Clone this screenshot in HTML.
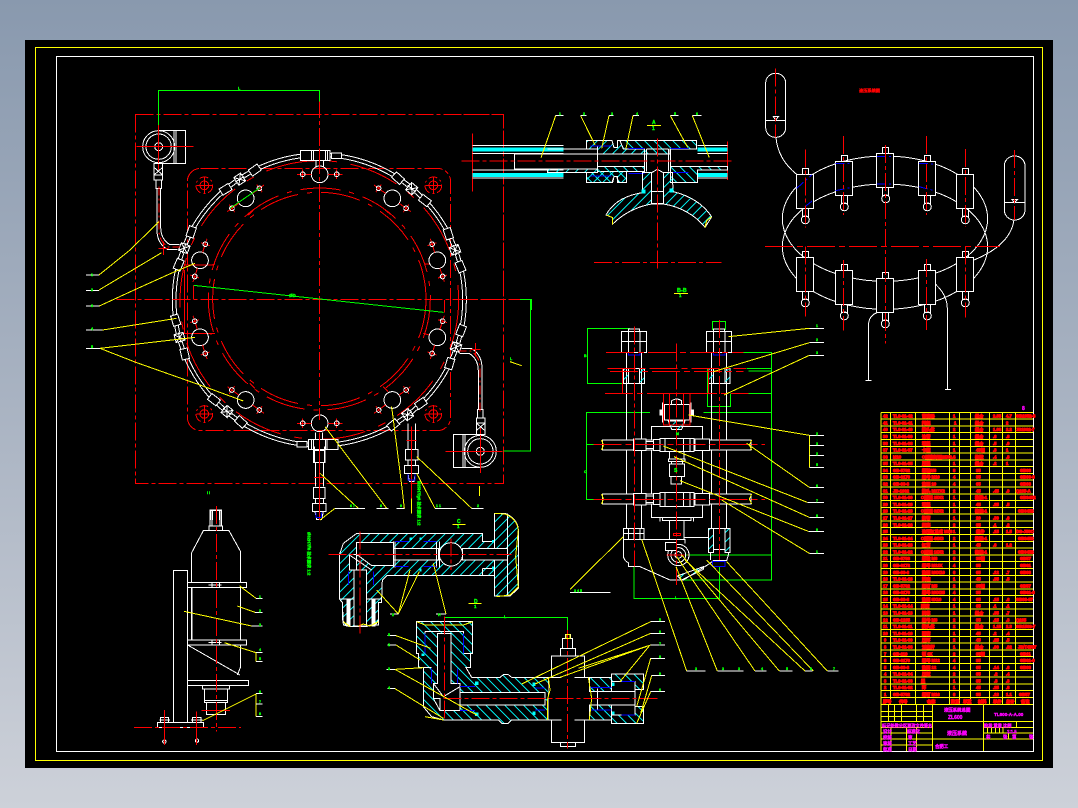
<!DOCTYPE html>
<html lang="zh"><head><meta charset="utf-8"><title>液压系统总图</title>
<style>
html,body{margin:0;padding:0;width:1078px;height:808px;overflow:hidden;background:linear-gradient(180deg,#8999ae 0%,#a9b3c2 50%,#cdd1d9 100%)}
svg{position:absolute;left:0;top:0;display:block}
svg *{vector-effect:non-scaling-stroke;fill:none;stroke-width:1}
pattern *{vector-effect:none!important;stroke-width:4.5!important;stroke:#0ff}
.w{stroke:#fff}.r{stroke:#f00}.y{stroke:#ff0}.g{stroke:#0f0}.c{stroke:#0ff}.b{stroke:#00f}
.d{stroke-dasharray:18 3 4 3}.e{stroke-dasharray:9 3 2 3}.sp{stroke-dasharray:14 3 2 3}
.k{fill:#000!important}.h1{fill:url(#h1)!important}.h2{fill:url(#h2)!important}.cf{fill:#0ff!important}
text{font-family:"Liberation Sans","Noto Sans CJK SC",sans-serif;font-size:4.2px;stroke-width:.4!important;font-weight:700}
.tr,.tr *{fill:#f00!important;stroke:#f00}
.tm,.tm *{fill:#f0f!important;stroke:#f0f}
.tg,.tg *{fill:#0f0!important;stroke:#0f0;font-size:3.6px}
</style></head><body>
<svg width="1078" height="808" viewBox="0 0 1078 808" shape-rendering="crispEdges">
<defs>
<pattern id="h1" width="20" height="20" patternUnits="userSpaceOnUse" patternTransform="rotate(45)"><path d="M0 0V20"/></pattern>
<pattern id="h2" width="20" height="20" patternUnits="userSpaceOnUse" patternTransform="rotate(-45)"><path d="M0 0V20"/></pattern>
<g id="bt"><circle class="w" r="25"/><path class="r" d="M-68 0H-25M25 0H68M-51 -14V14M51 -14V14"/><circle class="w" cx="-51" r="7"/><circle class="w" cx="51" r="7"/></g>
<g id="cm"><circle class="r e" r="25"/><circle class="r" r="13"/><path class="r" d="M-24 0H24M0 -24V24"/></g>
<g id="ft"><rect class="w k" x="662" y="211" width="88" height="30"/><path class="w" d="M695 211V241M700 211V241M736 211V241M742 211V241"/><rect class="w k" x="755" y="219" width="30" height="16"/><path class="w" d="M708 241V262M730 241V262"/><path class="r" d="M718 205V262"/></g>
<g id="f2"><rect class="w k" x="706" y="212" width="24" height="28"/><path class="w" d="M706 212L730 240M730 212L706 240M702 226H734"/><rect class="w k" x="650" y="217" width="32" height="22" transform="rotate(2 666 228)"/><rect class="w k" x="755" y="217" width="32" height="22" transform="rotate(-2 771 228)"/></g>
<g id="ve"><circle class="w" cx="236" cy="200" r="48"/><circle class="w" cx="236" cy="200" r="38"/><circle class="w" cx="236" cy="200" r="12"/><path class="w" d="M236 152H317V250H236M282 152V250M288 152V250"/><path class="r" d="M170 200H340M236 135V270"/><path class="w" d="M222 250H248V300H222ZM228 300H245V325H228ZM222 262L248 285M248 262L222 285M222 285H248"/><path class="w" d="M231 325V450Q231 490 262 508H292M242 325V440Q242 478 270 494H298"/><path class="r e" d="M237 320V450Q237 485 265 501H300"/><path class="r" d="M250 485V525M235 505H265"/></g>
<g id="cy"><rect class="w" x="6" y="-6" width="6" height="6"/><rect class="w" x="6" y="34" width="6" height="8"/><circle class="w" cx="9" cy="45.5" r="4"/><rect class="w k" width="17" height="34"/></g>
</defs>

<rect x="25" y="40" width="1028" height="728" fill="#000" style="fill:#000"/>
<rect class="y" x="35.5" y="47.5" width="1007" height="713"/>
<rect class="w" x="56.5" y="56.5" width="977" height="695"/>

<!-- main ring view -->
<g transform="translate(80 80) scale(.33333)">
<rect class="r d" x="166" y="103" width="1104" height="1107"/>
<rect class="r d" x="322" y="265" width="790" height="787" rx="40"/>
<path class="r" d="M313 570V760H400M313 555H400"/>
<circle class="r" style="stroke-dasharray:40 9 5 9" cx="718" cy="657" r="333"/>
<circle class="r" style="stroke-dasharray:40 9 5 9" cx="718" cy="657" r="320"/>
<path class="r" d="M405 552L395 555M1035 552H1050M405 760L390 762M1030 760L1048 765M520 390L505 405M915 390L930 402M525 925L510 910M910 920L925 935"/>
<circle class="w" cx="718" cy="660" r="441"/>
<circle class="w" cx="718" cy="660" r="430"/>
<circle class="r" style="stroke-dasharray:50 14 8 14" cx="718" cy="660" r="418"/>
<use href="#ft"/>
<use href="#ft" transform="rotate(180 718 660)"/>
<use href="#f2" transform="rotate(39.7 718 660)"/>
<use href="#f2" transform="rotate(69.7 718 660)"/>
<use href="#f2" transform="rotate(109 718 660)"/>
<use href="#f2" transform="rotate(142.4 718 660)"/>
<use href="#f2" transform="rotate(219.6 718 660)"/>
<use href="#f2" transform="rotate(255 718 660)"/>
<use href="#f2" transform="rotate(291 718 660)"/>
<use href="#f2" transform="rotate(326.6 718 660)"/>
<use href="#bt" transform="translate(719 283)"/>
<use href="#bt" transform="translate(719 1030)"/>
<use href="#bt" transform="translate(497 355) rotate(-36)"/>
<use href="#bt" transform="translate(937 355) rotate(36)"/>
<use href="#bt" transform="translate(1072 541) rotate(72)"/>
<use href="#bt" transform="translate(1072 772) rotate(108)"/>
<use href="#bt" transform="translate(937 960) rotate(144)"/>
<use href="#bt" transform="translate(497 960) rotate(216)"/>
<use href="#bt" transform="translate(360 772) rotate(252)"/>
<use href="#bt" transform="translate(360 541) rotate(288)"/>
<use href="#cm" transform="translate(373 316)"/>
<use href="#cm" transform="translate(1060 316)"/>
<use href="#cm" transform="translate(373 1002)"/>
<use href="#cm" transform="translate(1060 1002)"/>
<use href="#ve"/>
<use href="#ve" transform="rotate(180 718.5 657)"/>
<path class="r d" d="M718 60V1020M110 658H1320"/>
<path class="w" d="M703 1100V1148H733V1100M700 1112H735V1148H700ZM706 1148V1220M730 1148V1220M700 1222H735V1255H700ZM697 1270H738V1295H697ZM706 1255V1270M730 1255V1270M705 1295L710 1318H725L730 1295"/>
<path class="r" d="M702 1192H732M718 1060V1320"/><path class="b" d="M708 1297V1313H725V1297"/>
<path class="w" d="M984 1030V1108M1006 1030V1108M976 1108H1014V1140H976ZM984 1140V1156M1006 1140V1156M973 1156H1016V1180H973ZM984 1180L988 1204H1002L1006 1180"/>
<path class="r" d="M980 1082H1010M994 1040V1300"/><path class="b" d="M984 1182V1200H1005V1182"/>
<path class="g" d="M235 135V31H718V65"/>
<path class="g" d="M340 616L1090 697"/>
<path class="r" d="M340 616V657M1093 660V697"/>
<path class="g" d="M1270 1113H1351V658H1320M450 385L540 323"/>
<path class="y" d="M57 585L150 510L237 425M57 630L245 518M58 678L180 622L280 577L345 550M68 750L290 715M60 805L345 772M60 805L170 848L360 915L490 963"/>
<path class="w" d="M18 585H57M18 632H57M18 678H58M18 750H68M18 805H60"/>
<path class="y" d="M720 1180L835 1285M735 1040L920 1285M720 1320L765 1285M935 980L965 1215L973 1285M1010 1180L1065 1285M1010 1130L1175 1285M994 1255V1300M1198 1218V1248M1290 845L1325 857"/>
<path class="w" d="M765 1285H855M890 1285H925M950 1285H973M1065 1285H1130M1175 1285H1210"/>
<path class="r" d="M410 1278V1320"/>
<path class="w" d="M392 1320V1292H425V1320M398 1292V1320M418 1292V1320"/>
</g>
<text class="tg" x="238" y="89.5">L</text>
<text class="tg" x="289" y="297" style="font-size:4.5px">ØD</text>
<text class="tg" x="91" y="276">1</text>
<text class="tg" x="91" y="291">2</text>
<text class="tg" x="91" y="307">3</text>
<text class="tg" x="91" y="330">4</text>
<text class="tg" x="91" y="348">5</text>
<text class="tg" x="207" y="494">I I</text>
<text class="tg" x="350" y="507">6 7</text>
<text class="tg" x="380" y="507">8</text>
<text class="tg" x="400" y="507">9</text>
<text class="tg" x="436" y="507">1 1</text>
<text class="tg" x="477" y="507">2</text>
<text class="tg" x="510" y="360">L</text>
<text class="tg" transform="translate(417.5 481) rotate(90)" style="font-size:4.2px">Ø25H7/g6 技术要求 1:2</text>
<text class="tg" transform="translate(307.5 532) rotate(90)" style="font-size:4.2px">Ø32H7/f6 技术要求 1:2</text>

<!-- top section view -->
<g transform="translate(460 70) scale(.33333)">
<path class="r d" d="M10 133H130V720M0 688H180"/>
<path class="g" d="M180 688H214V720"/>
<path class="r" d="M37 190V365M802 215V330"/>
<path class="w" d="M37 226H310M37 250H310M37 300H310M37 324H310M712 226H803M712 250H803M712 300H803M712 324H803"/>
<rect class="cf" x="37" y="232" width="273" height="13" style="stroke:none"/><rect class="cf" x="37" y="309" width="273" height="12" style="stroke:none"/>
<rect class="cf" x="712" y="232" width="91" height="13" style="stroke:none"/><rect class="cf" x="712" y="309" width="91" height="12" style="stroke:none"/>
<path class="w h1" d="M262 237H380V212H456L462 233H472V212H480L490 237H553V252H412V237ZM262 307H380V337H456L462 320H472V337H500V305H412V297H262Z"/>
<path class="w h2" d="M480 212H710V237H630V252H553V237H490ZM412 289H553V305H500V337H476L470 320H462L458 337H380V307H412ZM632 289H803V300H712V337H632Z"/>
<path class="w" d="M163 252H412V297H163ZM412 230V305M553 237V305M560 237V305M625 237V305M632 237V305M560 237H625"/>
<path class="b" d="M392 228H455M392 318H455M505 235H553M632 235H685M505 310H553M632 308H685"/>
<path class="w h1" d="M548 308H575V400H610V308H638V340L640 365C680 375 725 395 755 440L748 452L735 472C710 440 665 410 610 402H575C530 410 490 430 457 463L458 443L438 435C460 395 500 375 548 368Z"/>
<rect class="k" x="576" y="310" width="33" height="54" style="stroke:none"/>
<path class="w" d="M575 308L592 298L610 308M575 365H610"/>
<rect class="cf" x="544" y="358" width="12" height="12" style="stroke:none"/><rect class="cf" x="629" y="356" width="12" height="12" style="stroke:none"/>
<path class="y" d="M440 435L458 443V463M755 440L740 452L735 472"/>
<path class="r d" d="M5 273H815M592 205V595M402 577H785"/>
<path class="y" d="M243 263L287 137M405 225L362 137M425 235L447 137M498 235L519 137M683 232L631 137M748 263L697 137M561 166H603M642 670H684"/>
<path class="w" d="M287 137H310M362 137H380M447 137H461M519 137H537M631 137H655M697 137H725"/>
</g>
<text class="tg" x="559" y="115">1</text><text class="tg" x="583" y="115">2</text><text class="tg" x="611" y="115">3</text><text class="tg" x="636" y="115">4</text><text class="tg" x="674" y="115">5</text><text class="tg" x="696" y="115">6</text>
<text class="tg" x="652" y="124" style="font-size:5px">A</text><text class="tg" x="652" y="130" style="font-size:5px">1</text>
<text class="tg" x="677" y="292" style="font-size:5.5px">B-B</text><text class="tg" x="679" y="297" style="font-size:4.5px">1</text>

<!-- schematic -->
<g transform="translate(750 60) scale(.33333)">
<rect class="w" x="47" y="40" width="60" height="192" rx="29"/><path class="w" d="M47 181H107M70 170H85L77 180Z"/>
<rect class="w" x="763" y="288" width="62" height="192" rx="30"/><path class="w" d="M763 427H825M786 419H802L794 428Z"/>
<path class="w" d="M78 232C82 280 105 315 140 343M792 480C785 530 745 570 672 600M385 757C365 762 355 775 355 800V962M347 962H365M530 652C565 675 592 705 592 745V988M585 988H603"/>
<ellipse class="w" cx="405" cy="476" rx="308" ry="188"/>
<ellipse class="w" cx="405" cy="560" rx="308" ry="188"/>
</g>
<use href="#cy" transform="translate(796.3 174.3)"/><use href="#cy" transform="translate(835.3 161.3)"/><use href="#cy" transform="translate(876.7 153.3)"/><use href="#cy" transform="translate(918.3 161.3)"/><use href="#cy" transform="translate(956.3 174.3)"/>
<use href="#cy" transform="translate(796.3 257.3)"/><use href="#cy" transform="translate(835.3 270.3)"/><use href="#cy" transform="translate(876.3 278.3)"/><use href="#cy" transform="translate(918.3 270.3)"/><use href="#cy" transform="translate(956.3 257.3)"/>
<g transform="translate(750 60) scale(.33333)">
<path class="b e" d="M140 385L185 345M165 440L190 420M257 310H305M257 392L305 382M381 289H430M381 372H430M507 380L553 392M507 310L553 312"/>
<path class="r d" d="M77 25V232M793 270V480M166 268V502M166 560V770M280 228V465M280 600V812M406 255V850M529 228V465M529 597V810M646 267V500M646 560V772"/>
<path class="r" d="M45 559H750" style="stroke-dasharray:28 4 6 4"/>
</g>
<text class="tr" x="859" y="92">液压系统图</text>

<!-- mechanism -->
<g transform="translate(570 310) scale(.33333)">
<path class="g" d="M180 55H53V220H160M240 307H50V568H70M50 403H95M400 307H605M520 127H605V810H320M530 175H605M535 183H605M535 250H605M345 735H605M192 770V865H448V770M427 60V35H467V60M412 175V290H482V250"/>
<path class="w" d="M170 127V655M215 127V655M425 127V655M470 127V655"/>
<rect class="w k" x="154" y="64" width="76" height="63"/><path class="w" d="M175 64V127M210 64V127M154 95H230M175 64V57H208V64"/>
<rect class="w k" x="409" y="64" width="76" height="63"/><path class="w" d="M430 64V127M465 64V127M409 95H485M430 64V57H463V64"/>
<path class="b" d="M175 127V135H210V127M430 127V135H465V127"/>
<rect class="w h1" x="160" y="175" width="15" height="45"/><rect class="w h1" x="209" y="175" width="15" height="45"/>
<rect class="w h1" x="415" y="175" width="15" height="45"/><rect class="w h1" x="465" y="175" width="15" height="45"/>
<path class="w" d="M175 220H209M430 220H465M175 175H209"/>
<rect class="w k" x="244" y="349" width="154" height="274"/>
<path class="w" d="M270 622V634M370 622V634"/>
<rect class="w k" x="97" y="390" width="446" height="30"/><rect class="w k" x="97" y="552" width="446" height="30"/>
<path class="y" d="M95 390L100 405L95 420M545 390L538 405L545 420M95 552L100 567L95 582M545 552L538 567L545 582"/>
<rect class="w k" x="190" y="387" width="38" height="35"/><rect class="w k" x="375" y="387" width="43" height="35"/><rect class="w k" x="190" y="550" width="38" height="35"/><rect class="w k" x="375" y="550" width="43" height="35"/>
<rect class="w k" x="228" y="395" width="22" height="20"/><rect class="w k" x="228" y="558" width="22" height="20"/>
<rect class="w k" x="250" y="388" width="20" height="34"/><rect class="w k" x="250" y="550" width="20" height="34"/>
<rect class="w k" x="270" y="385" width="102" height="40"/><rect class="w k" x="270" y="547" width="102" height="43"/>
<path class="w" d="M285 385V425M340 385V425M360 385V425M285 547V590M340 547V590M360 547V590M298 425V447M342 425V447"/>
<rect class="w k" x="295" y="447" width="50" height="8"/><rect class="w k" x="298" y="462" width="46" height="38"/>
<path class="w" d="M303 500V522H335V500M305 455V462M338 455V462"/>
<path class="w h1" d="M295 333H345L335 358H305Z"/>
<rect class="w k" x="283" y="283" width="75" height="47"/><path class="w" d="M278 277V337M363 277V337M305 283V272Q320 262 335 272V283M298 330H342"/>
<rect class="w" x="270" y="300" width="8" height="15" style="fill:#fff!important"/><rect class="w" x="363" y="300" width="8" height="15" style="fill:#fff!important"/>
<path class="r" d="M280 250H360V345H280ZM298 250V345M340 250V345"/>
<rect class="w k" x="278" y="622" width="85" height="10"/><rect class="w k" x="298" y="632" width="44" height="56"/>
<rect class="w k" x="160" y="655" width="62" height="33"/><path class="w" d="M175 655V688M192 655V688M210 655V688M160 670H222"/>
<rect class="w h1" x="415" y="655" width="15" height="73"/><rect class="w h1" x="465" y="655" width="15" height="73"/>
<path class="w" d="M430 655H465M430 718H465M342 682H415M160 688H345V700M160 688V740Q165 755 175 758V770H210L300 810H340L420 760L430 752H470L475 735V728M422 728V750"/>
<path class="b" d="M428 755H465V770H428Z"/>
<circle class="w" cx="325" cy="735" r="32"/><circle class="w" cx="325" cy="735" r="22"/><circle class="w" cx="325" cy="735" r="10"/>
<rect class="w k" x="287" y="697" width="33" height="25"/>
<path class="w h1" d="M322 798L400 770V778L335 810Z"/>
<path class="r" style="stroke-dasharray:28 4 6 4" d="M108 127H520M112 175H528M120 184H520M105 250H535M70 403H585M70 568H585"/>
<path class="r" d="M157 175V250M415 175V250M310 670H332V676H310Z"/>
<path class="r d" d="M320 100V825M193 50V770M448 30V750M290 735H355"/>
<path class="y" d="M475 80L718 55M430 185L718 98M462 255L718 136M355 315L718 376V472M718 407H740M718 437H740M530 400L718 532M280 408L712 577M312 440L718 622M330 512L715 664M455 570L718 730M215 688L350 1083M318 770L442 1083M320 740L555 1083M335 735L628 1083M345 750L705 1083M410 750L730 1083M470 755L772 1083M160 680L0 838"/>
<path class="w" d="M718 55H762M718 98H762M718 136H762M718 376H762M718 407H762M718 437H762M718 472H762M718 532H762M712 577H762M718 622H762M715 664H762M718 730H762M350 1083H407M442 1083H520M555 1083H590M628 1083H668M705 1083H728M772 1083H806M0 848H122"/>
</g>
<text class="tg" x="816" y="327">1</text><text class="tg" x="816" y="341">2</text><text class="tg" x="816" y="354">3</text>
<text class="tg" x="816" y="435">2</text><text class="tg" x="816" y="445">3</text><text class="tg" x="816" y="455">2</text><text class="tg" x="816" y="466">5</text>
<text class="tg" x="816" y="487">6</text><text class="tg" x="816" y="502">7</text><text class="tg" x="816" y="517">8</text><text class="tg" x="816" y="531">9</text><text class="tg" x="816" y="553">1</text>
<text class="tg" x="695" y="670">3</text><text class="tg" x="722" y="670">3</text><text class="tg" x="738" y="670">3</text><text class="tg" x="761" y="670">4</text><text class="tg" x="786" y="670">5</text><text class="tg" x="810" y="670">6</text><text class="tg" x="833" y="670">7</text>
<text class="tg" x="574" y="592">3 4 5</text>
<text class="tg" x="584" y="357">B</text><text class="tg" x="584" y="473">C</text><text class="tg" x="676" y="435">M</text><text class="tg" x="674" y="472" style="font-size:5px">S</text><text class="tg" x="675" y="599">L</text>

<!-- upper elbow + accumulator -->
<g transform="translate(130 490) scale(.33333)">
<path class="w h1" d="M680 130H1058V155H1093V257H770L757 270L755 327V337H745V405H720L710 410H672L660 410L640 405L637 337L628 327V195L640 160Z" />
<path class="w h1" d="M1093 70H1125C1150 80 1165 100 1165 120V295L1140 318H1093Z"/>
<path class="w" d="M1058 235H1093M1058 257V235M1133 70V318"/>
<rect class="k" x="1094" y="176" width="38" height="33" style="stroke:none"/>
<path class="w k" d="M680 157H790V227H725L680 193H658V240H680Z" />
<rect class="w k" x="790" y="175" width="135" height="35"/>
<circle class="w k" cx="963" cy="193" r="35"/>
<rect class="w k" x="998" y="175" width="135" height="35"/>
<rect class="w k" x="672" y="240" width="38" height="168"/>
<path class="w" d="M790 155V232M795 155V232M920 155V232M928 155V232M658 195L725 240M628 327H672M710 327H755M637 337V390L650 408M745 337V390L735 408"/>
<path class="b" d="M795 155H835M880 155H920M795 230H835M880 230H920M655 245V285M730 245V285"/>
<rect x="650" y="325" width="12" height="85" style="fill:#fff!important;stroke:none"/><rect x="724" y="325" width="12" height="85" style="fill:#fff!important;stroke:none"/>
<path class="y" d="M1093 70L1125 72Q1160 85 1165 120L1157 200L1165 290L1140 315L1100 320M640 395L660 410M685 408L700 402L720 408L745 395M740 300L805 372M840 240L805 372M868 245L805 372M910 220L948 372M967 103H1007M1015 340H1055"/>
<path class="w" d="M780 372H805M918 372H948"/>
<rect class="cf" x="838" y="142" width="8" height="8" style="stroke:none"/><rect class="cf" x="868" y="142" width="6" height="8" style="stroke:none"/><rect class="cf" x="1086" y="150" width="6" height="8" style="stroke:none"/><rect class="cf" x="1086" y="230" width="6" height="8" style="stroke:none"/><rect class="cf" x="868" y="236" width="6" height="8" style="stroke:none"/>
<path class="r d" d="M595 193H1145M963 145V240M690 125V430"/>
<path class="g" d="M943 382H1250"/>

<!-- accumulator assembly -->
<rect class="w" x="240" y="60" width="35" height="48"/><path class="w" d="M246 60V108M270 60V108"/>
<rect class="w" x="237" y="108" width="41" height="14"/>
<path class="w" d="M184 278V190L220 122H297L332 185V278"/>
<rect class="w" x="173" y="277" width="177" height="16"/>
<path class="w" d="M184 293V450M332 293V450M186 293V450"/>
<rect class="w" x="173" y="450" width="177" height="15"/>
<path class="w" d="M332 465V530L322 555M173 465L330 555"/>
<rect class="w" x="173" y="572" width="183" height="15"/>
<rect class="w" x="130" y="241" width="43" height="456"/>
<rect class="w" x="217" y="587" width="81" height="10"/>
<rect class="w" x="224" y="597" width="69" height="35"/>
<rect class="w" x="224" y="632" width="69" height="6"/>
<rect class="w" x="229" y="638" width="58" height="35"/>
<rect class="w k" x="82" y="697" width="138" height="15"/>
<path class="w" d="M92 697V682H115V697M187 697V682H213V697M88 690H120M183 690H217M103 712V748M199 712V745M236 285H275M236 458H275M246 278V292M268 278V292M246 452V464M268 452V464"/>
<circle class="w" cx="103" cy="755" r="5"/><circle class="w" cx="201" cy="752" r="5"/>
<path class="r d" d="M259 48V725"/><path class="r" d="M103 660V765M199 665V765M215 661H300"/>
<path class="r d" d="M12 712H333"/>
<path class="y" d="M328 287L378 325M322 348L375 367M162 364L365 408M283 458L378 488V515M218 692L378 612V680"/>
<path class="w" d="M378 325H398M375 367H398M365 408H398M378 488H398M378 515H398M378 610H398M378 642H398M378 680H398"/>
</g>
<text class="tg" x="259" y="598">1</text><text class="tg" x="259" y="612">2</text><text class="tg" x="259" y="626">3</text><text class="tg" x="259" y="651">4</text><text class="tg" x="259" y="660">5</text><text class="tg" x="259" y="693">6</text><text class="tg" x="259" y="703">7</text><text class="tg" x="259" y="715">8</text>
<text class="tg" x="457" y="523" style="font-size:5px">C</text><text class="tg" x="457" y="528" style="font-size:4.5px">1</text>
<text class="tg" x="474" y="603" style="font-size:5px">D</text><text class="tg" x="474" y="608" style="font-size:4.5px">1</text>
<text class="tg" x="392" y="616">2</text><text class="tg" x="438" y="616">H</text>

<!-- lower elbow -->
<g transform="translate(380 600) scale(.33333)">
<path class="w h2" d="M109 65H278V160H272V203H258L275 232H360L370 224H385L395 232H505V360H395L385 370H365L355 360H190L155 350L130 320V203H115V160H109Z"/>
<path class="w" d="M109 160H115M272 160H250M115 203H155M135 95H252"/>
<path class="w k" d="M172 100H213V250H240V277H495V315H240V332H180L160 295V250H172Z"/>
<path class="w" d="M160 295H180V332M240 258V332M160 250L190 290L240 260M135 95V160M250 95V160M240 332H285"/>
<path class="b" d="M135 100V160M250 100V160M155 205V250M232 205V250M240 260H285M240 332H285M465 264H495M465 330H495"/>
<rect class="cf" x="125" y="160" width="8" height="8" style="stroke:none"/><rect class="cf" x="285" y="245" width="10" height="10" style="stroke:none"/><rect class="cf" x="285" y="338" width="10" height="10" style="stroke:none"/><rect class="cf" x="458" y="248" width="8" height="10" style="stroke:none"/><rect class="cf" x="458" y="335" width="8" height="10" style="stroke:none"/><rect class="cf" x="694" y="248" width="10" height="10" style="stroke:none"/><rect class="cf" x="694" y="335" width="10" height="10" style="stroke:none"/>
<rect class="k" x="506" y="232" width="122" height="128" style="stroke:none"/>
<path class="w" d="M514 232V168H614V232M505 232H544M584 232H628M514 360V428H614V360M505 360H544M584 360H628"/>
<rect class="w k" x="541" y="145" width="45" height="23"/><rect class="w k" x="548" y="115" width="30" height="30"/><rect class="w k" x="556" y="103" width="16" height="12"/><rect class="w k" x="541" y="428" width="45" height="12"/>
<path class="w h2" d="M628 232H695V275H628ZM628 315H695V360H628ZM695 222H790V268H765V245H695ZM695 345H765V320H790V370H695Z"/>
<path class="w" d="M652 265V330M652 275H765M652 315H765M765 245V345"/>
<path class="b" d="M632 262H695M632 330H695M725 245H765M725 345H765"/>
<path class="y" d="M505 232L510 270L502 300V360M625 232L635 295L628 360M110 65L135 75H250L278 65M135 350L190 360"/>
<path class="g" d="M193 90V52H562V100"/>
<path class="r d" d="M193 50V365M562 90V445M190 295H840"/>
<path class="y" d="M22 107H48L152 145M22 135H48L120 180M20 208H45L130 203M45 208L290 345M22 266H45L190 355M425 252L812 65M465 252L812 100M595 205L812 135M540 232L812 135M720 245L810 135M770 320L812 175M782 340L815 227M770 370L812 275"/>
<path class="w" d="M22 107H48M22 135H48M20 208H45M22 266H45M812 65H855M812 100H855M812 135H855M812 175H855M815 227H855M812 275H855"/>
<path class="y" d="M558 103H570V115H558Z"/>
</g>
<text class="tg" x="388" y="636">5</text><text class="tg" x="388" y="646">2</text><text class="tg" x="388" y="670">3</text><text class="tg" x="388" y="689">4</text>
<text class="tg" x="659" y="621">5</text><text class="tg" x="659" y="633">6</text><text class="tg" x="659" y="645">7</text><text class="tg" x="659" y="658">8</text><text class="tg" x="659" y="675">9</text><text class="tg" x="659" y="691">6</text>
<text class="tg" x="504" y="618">L</text>

<!-- parts table -->
<path class="y" d="M881 412.3H1033M881 419.1H1033M881 425.9H1033M881 432.7H1033M881 439.5H1033M881 446.3H1033M881 453H1033M881 459.8H1033M881 466.6H1033M881 473.4H1033M881 480.2H1033M881 487H1033M881 493.8H1033M881 500.6H1033M881 507.4H1033M881 514.2H1033M881 521H1033M881 527.7H1033M881 534.5H1033M881 541.3H1033M881 548.1H1033M881 554.9H1033M881 561.7H1033M881 568.5H1033M881 575.3H1033M881 582.1H1033M881 588.8H1033M881 595.6H1033M881 602.4H1033M881 609.2H1033M881 616H1033M881 622.8H1033M881 629.6H1033M881 636.4H1033M881 643.2H1033M881 650H1033M881 656.7H1033M881 663.5H1033M881 670.3H1033M881 677.1H1033M881 683.9H1033M881 690.7H1033M881 697.5H1033M881 704.3H1033"/>
<path class="y" d="M881 412.3V751M890.3 412.3V704.3M915.3 412.3V704.3M949.3 412.3V704.3M959.3 412.3V704.3M970.3 412.3V704.3M989.7 412.3V704.3M1002.3 412.3V704.3M1015.3 412.3V704.3"/>
<text class="tm" x="1022" y="410" style="font-size:5px">8</text>
<g class="tr">
<text y="417.6"><tspan x="883">42</tspan><tspan x="893">TL6-01-42</tspan><tspan x="922">蓄能器</tspan><tspan x="953">1</tspan><tspan x="975">组合</tspan><tspan x="993">2.35</tspan><tspan x="1006">4.7</tspan><tspan x="1016">GB2352-8</tspan></text>
<text y="424.4"><tspan x="883">41</tspan><tspan x="893">TL6-01-41</tspan><tspan x="922">托架</tspan><tspan x="954">1</tspan><tspan x="975">组合</tspan><tspan x="1006">2</tspan></text>
<text y="431.2"><tspan x="883">40</tspan><tspan x="893">TL6-01-40</tspan><tspan x="922">接头体</tspan><tspan x="953">2</tspan><tspan x="975">组合</tspan><tspan x="993">1.08</tspan><tspan x="1006">2.2</tspan><tspan x="1016">JB1002-7</tspan></text>
<text y="438"><tspan x="883">39</tspan><tspan x="893">TL6-01-39</tspan><tspan x="922">油管</tspan><tspan x="953">1</tspan><tspan x="975">组合</tspan><tspan x="993">.6</tspan><tspan x="1006">.8</tspan></text>
<text y="444.8"><tspan x="883">38</tspan><tspan x="893">TL6-01-38</tspan><tspan x="922">端盖</tspan><tspan x="953">1</tspan><tspan x="975">组合</tspan><tspan x="993">.5</tspan><tspan x="1006">.9</tspan></text>
<text y="451.6"><tspan x="883">37</tspan><tspan x="893">TL6-01-37</tspan><tspan x="922">卡箍</tspan><tspan x="953">1</tspan><tspan x="976">45钢</tspan><tspan x="993">.3</tspan><tspan x="1006">1</tspan></text>
<text y="458.3"><tspan x="883">36</tspan><tspan x="893">M10</tspan><tspan x="922">O型密封圈25X2.4</tspan><tspan x="953">6</tspan><tspan x="975">橡胶</tspan><tspan x="993">.4</tspan><tspan x="1006">.8</tspan></text>
<text y="465.1"><tspan x="883">35</tspan><tspan x="893">TL6-01-35</tspan><tspan x="922">压盖</tspan><tspan x="953">1</tspan><tspan x="975">组合</tspan><tspan x="993">.2</tspan><tspan x="1006">1</tspan></text>
<text y="471.9"><tspan x="883">34</tspan><tspan x="893">GB-5782</tspan><tspan x="922">螺栓M8</tspan><tspan x="953">8</tspan><tspan x="976">35</tspan><tspan x="1020">GB93</tspan></text>
<text y="478.7"><tspan x="883">33</tspan><tspan x="893">GB-6170</tspan><tspan x="922">螺母 M10</tspan><tspan x="953">4</tspan><tspan x="976">35</tspan><tspan x="1020">GB93-8</tspan></text>
<text y="485.5"><tspan x="883">32</tspan><tspan x="893">GB-93-8</tspan><tspan x="922">垫圈 10</tspan><tspan x="953">4</tspan><tspan x="976">65</tspan><tspan x="1020">GB93</tspan></text>
<text y="492.3"><tspan x="883">31</tspan><tspan x="893">JB-1002</tspan><tspan x="922">接头 M27X2</tspan><tspan x="953">2</tspan><tspan x="976">45</tspan><tspan x="993">.45</tspan><tspan x="1006">.9</tspan><tspan x="1016">Q235-A</tspan></text>
<text y="499.1"><tspan x="883">30</tspan><tspan x="893">TL6-01-30</tspan><tspan x="921">O型圈 25X2</tspan><tspan x="953">1</tspan><tspan x="975">橡胶-1</tspan><tspan x="1020">GB3452</tspan></text>
<text y="505.9"><tspan x="883">29</tspan><tspan x="893">TL6-01-29</tspan><tspan x="922">端盖</tspan><tspan x="953">1</tspan><tspan x="976">45</tspan><tspan x="993">.25</tspan><tspan x="1006">.5</tspan></text>
<text y="512.7"><tspan x="883">28</tspan><tspan x="893">TL6-01-28</tspan><tspan x="921">O型圈 32X2</tspan><tspan x="953">2</tspan><tspan x="975">橡胶-1</tspan><tspan x="1018">GB3452</tspan></text>
<text y="519.5"><tspan x="883">27</tspan><tspan x="893">TL6-01-27</tspan><tspan x="922">接管</tspan><tspan x="953">1</tspan><tspan x="976">20</tspan><tspan x="993">.30</tspan><tspan x="1006">.6</tspan></text>
<text y="526.3"><tspan x="883">26</tspan><tspan x="893">TL6-01-26</tspan><tspan x="922">螺塞</tspan><tspan x="953">2</tspan><tspan x="976">35</tspan><tspan x="993">.1</tspan><tspan x="1006">.2</tspan></text>
<text y="533"><tspan x="883">25</tspan><tspan x="922">液压缸总成 M16</tspan><tspan x="953">1</tspan><tspan x="976">组件</tspan><tspan x="993">.15</tspan><tspan x="1006">1.5</tspan><tspan x="1016">DG-J50C</tspan></text>
<text y="539.8"><tspan x="883">24</tspan><tspan x="893">TL6-01-24</tspan><tspan x="921">O型圈 40X3</tspan><tspan x="953">2</tspan><tspan x="975">橡胶-1</tspan><tspan x="1018">GB3452</tspan></text>
<text y="546.6"><tspan x="883">23</tspan><tspan x="893">TL6-01-23</tspan><tspan x="922">缸筒</tspan><tspan x="953">1</tspan><tspan x="976">45</tspan><tspan x="993">.6</tspan><tspan x="1006">1.2</tspan></text>
<text y="553.4"><tspan x="883">22</tspan><tspan x="893">TL6-01-22</tspan><tspan x="921">O型圈 18X2</tspan><tspan x="953">2</tspan><tspan x="975">橡胶-1</tspan><tspan x="1018">GB3452</tspan></text>
<text y="560.2"><tspan x="883">21</tspan><tspan x="893">GB-5783</tspan><tspan x="922">螺栓 M6</tspan><tspan x="953">6</tspan><tspan x="976">35钢</tspan><tspan x="1020">GB57</tspan></text>
<text y="567"><tspan x="883">20</tspan><tspan x="893">GB-6172</tspan><tspan x="922">螺母 M12X</tspan><tspan x="953">4</tspan><tspan x="976">35</tspan><tspan x="1020">GB61</tspan></text>
<text y="573.8"><tspan x="883">19</tspan><tspan x="893">GB-93-6</tspan><tspan x="922">垫圈 M6X10</tspan><tspan x="953">6</tspan><tspan x="976">65</tspan><tspan x="993">.12</tspan><tspan x="1006">.7</tspan><tspan x="1020">GB93</tspan></text>
<text y="580.6"><tspan x="883">18</tspan><tspan x="893">TL6-01-18</tspan><tspan x="922">阀座</tspan><tspan x="953">1</tspan><tspan x="976">45</tspan><tspan x="993">.35</tspan><tspan x="1006">.5</tspan></text>
<text y="587.4"><tspan x="883">17</tspan><tspan x="893">GB-5782</tspan><tspan x="922">螺钉 M5</tspan><tspan x="953">2</tspan><tspan x="976">35钢</tspan><tspan x="1020">GB57</tspan></text>
<text y="594.1"><tspan x="883">16</tspan><tspan x="893">GB-6170</tspan><tspan x="922">螺母 M8X25</tspan><tspan x="953">4</tspan><tspan x="976">35</tspan><tspan x="1020">GB61-8</tspan></text>
<text y="600.9"><tspan x="883">15</tspan><tspan x="893">GB-93-8</tspan><tspan x="922">垫圈 8X10</tspan><tspan x="953">4</tspan><tspan x="976">65</tspan><tspan x="993">.15</tspan><tspan x="1006">.6</tspan><tspan x="1016">GB93-87</tspan></text>
<text y="607.7"><tspan x="883">14</tspan><tspan x="893">TL6-01-14</tspan><tspan x="921">弹簧</tspan><tspan x="953">1</tspan><tspan x="976">65</tspan><tspan x="993">.1</tspan><tspan x="1006">.1</tspan></text>
<text y="614.5"><tspan x="883">13</tspan><tspan x="893">TL6-01-13</tspan><tspan x="922">阀芯</tspan><tspan x="953">1</tspan><tspan x="975">组合</tspan><tspan x="993">.35</tspan><tspan x="1006">.7</tspan></text>
<text y="621.3"><tspan x="883">12</tspan><tspan x="893">GB-1235</tspan><tspan x="922">螺母 M8</tspan><tspan x="953">2</tspan><tspan x="976">35</tspan><tspan x="993">.15</tspan><tspan x="1006">.3</tspan><tspan x="1016">Q235</tspan></text>
<text y="628.1"><tspan x="883">11</tspan><tspan x="893">TL6-01-11</tspan><tspan x="922">接头体</tspan><tspan x="953">2</tspan><tspan x="975">组合</tspan><tspan x="993">1.15</tspan><tspan x="1006">2.3</tspan><tspan x="1016">GB1568-7</tspan></text>
<text y="634.9"><tspan x="883">10</tspan><tspan x="893">TL6-01-10</tspan><tspan x="922">隔套</tspan><tspan x="953">1</tspan><tspan x="976">45</tspan><tspan x="993">.2</tspan><tspan x="1006">.4</tspan></text>
<text y="641.7"><tspan x="884">9</tspan><tspan x="893">TL6-01-09</tspan><tspan x="922">压环</tspan><tspan x="953">2</tspan><tspan x="976">45</tspan><tspan x="993">.25</tspan><tspan x="1006">.5</tspan></text>
<text y="648.5"><tspan x="884">8</tspan><tspan x="893">TL6-01-08</tspan><tspan x="922">活塞杆</tspan><tspan x="953">1</tspan><tspan x="975">组合</tspan><tspan x="993">.90</tspan><tspan x="1006">.92</tspan><tspan x="1018">JB/T4567</tspan></text>
<text y="655.3"><tspan x="884">7</tspan><tspan x="893">GB-119</tspan><tspan x="922">销 8X</tspan><tspan x="953">2</tspan><tspan x="976">35钢</tspan><tspan x="1020">GB11</tspan></text>
<text y="662"><tspan x="884">6</tspan><tspan x="893">GB-6170</tspan><tspan x="922">螺母 M12</tspan><tspan x="953">4</tspan><tspan x="976">35</tspan><tspan x="1020">GB61-9</tspan></text>
<text y="668.8"><tspan x="884">5</tspan><tspan x="893">GB-93-8</tspan><tspan x="922">垫圈 12</tspan><tspan x="953">4</tspan><tspan x="976">65</tspan><tspan x="993">.14</tspan><tspan x="1006">.6</tspan><tspan x="1020">GB93</tspan></text>
<text y="675.6"><tspan x="884">4</tspan><tspan x="893">TL6-01-04</tspan><tspan x="922">压板</tspan><tspan x="953">2</tspan><tspan x="976">35</tspan><tspan x="994">.2</tspan><tspan x="1006">.4</tspan></text>
<text y="682.4"><tspan x="884">3</tspan><tspan x="893">TL6-01-03</tspan><tspan x="921">盖</tspan><tspan x="953">1</tspan><tspan x="976">35</tspan><tspan x="994">.3</tspan><tspan x="1006">.3</tspan></text>
<text y="689.2"><tspan x="884">2</tspan><tspan x="893">TL6-01-02</tspan><tspan x="922">环</tspan><tspan x="953">1</tspan><tspan x="976">45</tspan><tspan x="993">.25</tspan><tspan x="1006">.8</tspan></text>
<text y="696"><tspan x="884">1</tspan><tspan x="893">GB-5782</tspan><tspan x="922">螺钉 M16</tspan><tspan x="953">6</tspan><tspan x="976">35</tspan><tspan x="993">.18</tspan><tspan x="1006">1.1</tspan><tspan x="1019">GB57</tspan></text>
<text y="702.8"><tspan x="883">序号</tspan><tspan x="899">代号</tspan><tspan x="927">名称</tspan><tspan x="951">数量</tspan><tspan x="963">单重</tspan><tspan x="978">材料</tspan><tspan x="993">单件</tspan><tspan x="1006">总计</tspan><tspan x="1021">备注</tspan></text>
</g>

<!-- title block -->
<path class="y" d="M881 711.3H932M881 716.3H932M881 721.7H1033M881 727.7H932M983 727.7H1033M881 733H932M983 733H1033M881 739H1033M881 745H932M888.3 704.3V721.7M894.3 704.3V721.7M901.3 704.3V721.7M916.3 704.3V721.7M923.3 704.3V721.7M932.3 704.3V751M983.3 704.3V751M891 727.7V751M906.7 727.7V751M916.3 727.7V751M1016.7 721.7V727.7M987.3 727.7V733M991.7 727.7V733M995.3 727.7V733M999.3 727.7V733M1003 727.7V733M1008.3 733V739"/>
<g class="tm">
<text x="882" y="727" style="font-size:4.2px">标记处数分区更改文件签名</text>
<text x="883" y="733" style="font-size:4.4px">设计</text><text x="907" y="733" style="font-size:4.4px">标准化</text>
<text x="883" y="739" style="font-size:4.4px">校核</text><text x="908" y="739" style="font-size:4.4px">审</text>
<text x="883" y="745" style="font-size:4.4px">审核</text><text x="908" y="745" style="font-size:4.4px">工艺</text>
<text x="883" y="751" style="font-size:4.4px">批准</text><text x="908" y="751" style="font-size:4.4px">日期</text>
<text x="944" y="711.5" style="font-size:4.4px">液压系统总图</text>
<text x="948" y="719" style="font-size:5px">ZL600</text>
<text x="994" y="716" style="font-size:4.6px">TL600-A-A.00</text>
<text x="947" y="735" style="font-size:5px">液压系统</text>
<text x="935" y="748" style="font-size:4.4px">合肥工</text>
<text x="984" y="727" style="font-size:4.2px">阶段 重量 比例</text>
<text x="1007" y="733" style="font-size:4.2px">1:1.5</text>
<text x="986" y="738.5" style="font-size:4.4px">共</text><text x="1003" y="738.5" style="font-size:4.4px">张</text><text x="1012" y="738.5" style="font-size:4.4px">第</text><text x="1029" y="738.5" style="font-size:4.4px">张</text>
</g>
</svg>
</body></html>
